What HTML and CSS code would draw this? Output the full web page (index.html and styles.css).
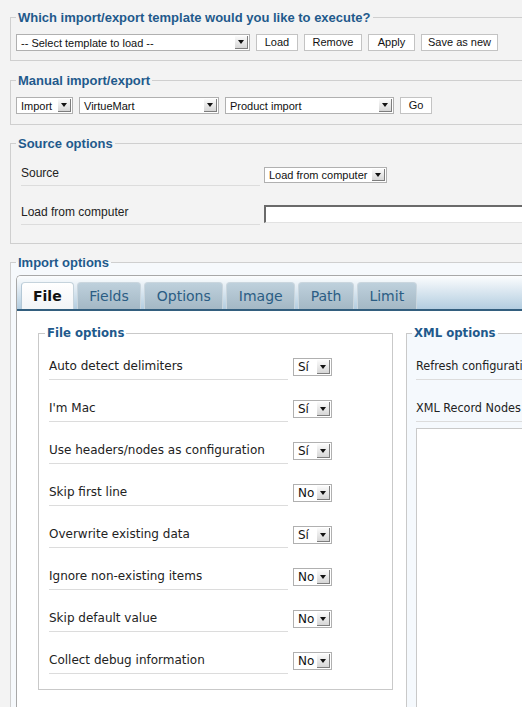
FILE: index.html
```html
<!DOCTYPE html>
<html>
<head>
<meta charset="utf-8">
<title>Import/Export</title>
<link rel="stylesheet" href="styles.css">
</head>
<body>
<div class="page">

  <fieldset class="fs fs-template">
    <legend>Which import/export template would you like to execute?</legend>
    <div class="ctrl-row">
      <span class="sel sel-template"><span class="sel-text">-- Select template to load --</span><span class="sel-arrow"></span></span>
      <button class="btn btn-load">Load</button>
      <button class="btn btn-remove">Remove</button>
      <button class="btn btn-apply">Apply</button>
      <button class="btn btn-save">Save as new</button>
    </div>
  </fieldset>

  <fieldset class="fs fs-manual">
    <legend>Manual import/export</legend>
    <div class="ctrl-row">
      <span class="sel sel-action"><span class="sel-text">Import</span><span class="sel-arrow"></span></span>
      <span class="sel sel-component"><span class="sel-text">VirtueMart</span><span class="sel-arrow"></span></span>
      <span class="sel sel-operation"><span class="sel-text">Product import</span><span class="sel-arrow"></span></span>
      <button class="btn btn-go">Go</button>
    </div>
  </fieldset>

  <fieldset class="fs fs-source">
    <legend>Source options</legend>
    <div class="src-row">
      <div class="src-label">Source</div>
      <span class="sel sel-source"><span class="sel-text">Load from computer</span><span class="sel-arrow"></span></span>
    </div>
    <div class="src-row">
      <div class="src-label">Load from computer</div>
      <input class="file-input" type="text">
    </div>
  </fieldset>

  <fieldset class="fs fs-import">
    <legend>Import options</legend>
    <div class="tabbox">
      <div class="tabs">
        <div class="tab active">File</div>
        <div class="tab">Fields</div>
        <div class="tab">Options</div>
        <div class="tab">Image</div>
        <div class="tab">Path</div>
        <div class="tab">Limit</div>
      </div>
      <div class="panel">
        <fieldset class="opt-fs file-fs">
          <legend>File options</legend>
          <div class="opt-row"><div class="opt-label">Auto detect delimiters</div><span class="sel sel-yn"><span class="sel-text">Sí</span><span class="sel-arrow"></span></span></div>
          <div class="opt-row"><div class="opt-label">I'm Mac</div><span class="sel sel-yn"><span class="sel-text">Sí</span><span class="sel-arrow"></span></span></div>
          <div class="opt-row"><div class="opt-label">Use headers/nodes as configuration</div><span class="sel sel-yn"><span class="sel-text">Sí</span><span class="sel-arrow"></span></span></div>
          <div class="opt-row"><div class="opt-label">Skip first line</div><span class="sel sel-yn"><span class="sel-text">No</span><span class="sel-arrow"></span></span></div>
          <div class="opt-row"><div class="opt-label">Overwrite existing data</div><span class="sel sel-yn"><span class="sel-text">Sí</span><span class="sel-arrow"></span></span></div>
          <div class="opt-row"><div class="opt-label">Ignore non-existing items</div><span class="sel sel-yn"><span class="sel-text">No</span><span class="sel-arrow"></span></span></div>
          <div class="opt-row"><div class="opt-label">Skip default value</div><span class="sel sel-yn"><span class="sel-text">No</span><span class="sel-arrow"></span></span></div>
          <div class="opt-row"><div class="opt-label">Collect debug information</div><span class="sel sel-yn"><span class="sel-text">No</span><span class="sel-arrow"></span></span></div>
        </fieldset>
        <fieldset class="opt-fs xml-fs">
          <legend>XML options</legend>
          <div class="opt-row"><div class="opt-label">Refresh configuration</div></div>
          <div class="opt-row"><div class="opt-label">XML Record Nodes</div></div>
          <textarea class="xml-nodes"></textarea>
        </fieldset>
      </div>
    </div>
  </fieldset>

</div>
</body>
</html>
```
FILE: styles.css
```css
html, body {
  margin: 0;
  padding: 0;
  overflow: hidden;
}

body {
  background: #f3f3f3;
  font-family: "Liberation Sans", Arial, sans-serif;
  color: #222;
}

.page {
  width: 800px;
  padding-top: 10px;
}

/* ---------- outer fieldsets ---------- */
.fs {
  margin: 0 0 12px 10px;
  padding: 9px 5px 9px 5px;
  border: 1px solid #cfcfcf;
  min-width: 0;
}

.fs > legend {
  padding: 0 2px;
  font: bold 13px/15px "Liberation Sans", Arial, sans-serif;
  color: #1f5a8c;
}

.fs-manual { padding-bottom: 10px; margin-bottom: 11px; }
.fs-source { padding-bottom: 18px; margin-bottom: 11px; }
.fs-import {
  padding: 5px 0 0 5px;
  background: #f6f9fc;
  margin-bottom: 0;
}

/* ---------- controls ---------- */
.ctrl-row {
  display: flex;
  gap: 6px;
  align-items: flex-start;
}

.sel {
  display: inline-flex;
  box-sizing: border-box;
  border: 1px solid #b0b0b0;
  background: #fff;
  font: 11px "Liberation Sans", Arial, sans-serif;
  color: #111;
  flex: none;
}

.sel-text {
  flex: 1;
  padding-left: 4px;
  white-space: nowrap;
  overflow: hidden;
  align-self: center;
}

.sel-arrow {
  position: relative;
  width: 12px;
  margin: 1px 1px 1px 0;
  background: linear-gradient(#fbfbfb, #d6d6d6);
  border-right: 1px solid #7d7d7d;
  border-bottom: 1px solid #7d7d7d;
  flex: none;
}

.sel-arrow::after {
  content: "";
  position: absolute;
  left: 50%;
  top: 50%;
  margin: -2px 0 0 -3px;
  border-left: 3px solid transparent;
  border-right: 3px solid transparent;
  border-top: 4px solid #111;
}

.sel-template { width: 234px; height: 17px; }
.sel-action { width: 57px; height: 17px; }
.sel-component { width: 140px; height: 17px; }
.sel-operation { width: 169px; height: 17px; }
.sel-source { width: 123px; height: 16px; margin: 7px 0 0 4px; }

.btn {
  box-sizing: border-box;
  height: 17px;
  padding: 0;
  border: 1px solid #c3c3c3;
  background: #fff;
  font: 11px/15px "Liberation Sans", Arial, sans-serif;
  color: #111;
  flex: none;
}

.btn-load { width: 42px; }
.btn-remove { width: 58px; }
.btn-apply { width: 47px; }
.btn-save { width: 77px; }
.btn-go { width: 32px; }

/* ---------- source options ---------- */
.src-row {
  display: flex;
  align-items: flex-start;
  margin-left: 5px;
}

.src-row + .src-row { margin-top: 13px; }

.src-label {
  width: 239px;
  padding: 5px 0 4px;
  line-height: 16px;
  font-size: 12px;
  color: #222;
  border-bottom: 1px solid #dcdcdc;
  flex: none;
}

.file-input {
  box-sizing: border-box;
  width: 320px;
  height: 18px;
  margin: 6px 0 0 4px;
  padding: 0;
  background: #fff;
  border: 0;
  border-top: 2px solid #6a6a6a;
  border-left: 2px solid #6a6a6a;
  border-bottom: 1px solid #e2e2e2;
  flex: none;
}

/* ---------- tabs ---------- */
.tabbox {
  border: 1px solid #a8a8a8;
  border-right: 0;
  border-radius: 5px 0 0 0;
  overflow: hidden;
  background: #fff;
  height: 520px;
}

.tabs {
  display: flex;
  gap: 3px;
  padding: 6px 0 0 4px;
  background: linear-gradient(#fcfdfe, #b3cde0);
  border-bottom: 2px solid #335e7e;
}

.tab {
  box-sizing: border-box;
  height: 27px;
  padding: 0 11.5px;
  border: 1px solid #cad6de;
  border-bottom: 0;
  border-radius: 4px 4px 0 0;
  background: linear-gradient(#bed0dc, #a4b8c5);
  color: #2b5d84;
  font: 14px/26px "DejaVu Sans", Verdana, sans-serif;
}

.tab.active {
  padding: 0 11px;
  background: linear-gradient(#ffffff, #f2f4f6);
  border-color: #c5d3dc;
  border-left-color: #b4c8d6;
  color: #111;
  font-weight: bold;
}

.panel {
  display: flex;
  align-items: flex-start;
  gap: 13px;
  padding: 15px 0 0 21px;
}

/* ---------- option fieldsets ---------- */
.opt-fs {
  box-sizing: border-box;
  margin: 0;
  border: 1px solid #c9c9c9;
  min-width: 0;
  flex: none;
}

.opt-fs > legend {
  padding: 0 2px;
  font: bold 13px/14px "DejaVu Sans Condensed", "DejaVu Sans", sans-serif;
  color: #1f5a8c;
}

.file-fs {
  width: 355px;
  padding: 18px 10px 15px 6px;
  background: #fff;
}

.xml-fs {
  width: 400px;
  padding: 18px 10px 0 5px;
  background: #f5f9fd;
}

.opt-row {
  display: flex;
  align-items: flex-start;
  margin-left: 4px;
}

.opt-row + .opt-row { margin-top: 20px; }

.opt-label {
  width: 239px;
  line-height: 16px;
  padding-bottom: 5px;
  border-bottom: 1px solid #dcdcdc;
  font: 12px/16px "DejaVu Sans", Verdana, sans-serif;
  color: #222;
  white-space: nowrap;
  flex: none;
}

.xml-fs .opt-label {
  font-family: "DejaVu Sans Condensed", "DejaVu Sans", sans-serif;
  font-size: 12.5px;
}

.sel-yn {
  width: 39px;
  height: 18px;
  margin-left: 5px;
  font: 12px "DejaVu Sans", Verdana, sans-serif;
}

.xml-nodes {
  display: block;
  box-sizing: border-box;
  width: 320px;
  height: 300px;
  margin: 6px 0 0 4px;
  border: 1px solid #c9c9c9;
  background: #fff;
  resize: none;
}
```
